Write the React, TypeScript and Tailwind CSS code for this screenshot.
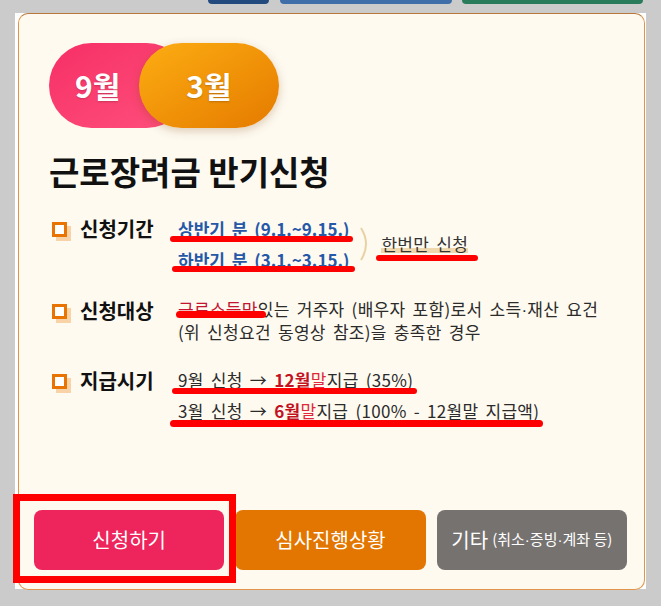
import type { ReactNode } from 'react'

function Box() {
  return <span className="mt-[6px] ml-[3px] block h-[15px] w-[15px] shrink-0 border-[3px] border-[#e87503] bg-white shadow-[4px_4px_0_#f9d3a8]" />
}

function Dot() {
  return <span className="font-['Liberation_Sans',sans-serif]">·</span>
}

function Row({ label, children, className }: { label: string; children: ReactNode; className: string }) {
  return (
    <div className={`flex items-start ${className}`}>
      <Box />
      <div className="ml-[13px] w-[98px] shrink-0 text-[20px] font-bold leading-[26px] text-[#111]">{label}</div>
      <div className="text-[17px] tracking-[0.3px] [word-spacing:3px] text-[#2b2b2b]">{children}</div>
    </div>
  )
}

export default function App() {
  return (
    <div className="min-h-[606px] bg-[#cbcbcb] font-['Noto_Sans_CJK_KR',sans-serif]">
      <div className="flex h-[4px] items-end">
        <div className="ml-[208px] h-[4px] w-[61px] rounded-b-[4px] bg-[#234a7e]" />
        <div className="ml-[11px] h-[4px] w-[172px] rounded-b-[4px] bg-[#3f6ea8]" />
        <div className="ml-[10px] h-[4px] w-[181px] rounded-b-[4px] bg-[#2a7b5c]" />
      </div>

      <div className="ml-[15px] mt-[11px] h-[576px] w-[631px] bg-white pl-[3px] pr-[1px]">
        <div className="-mt-[2px] flex h-[577px] flex-col rounded-[10px] border border-[#e0954a] border-t-[#b8783c] bg-[#fefaf0] pl-[30px] pt-[29px] pb-[19px]">
          <div className="flex">
            <div className="flex h-[85px] w-[140px] items-center rounded-full bg-gradient-to-br from-[#f62e66] to-[#ff4f7c] pl-[26px] text-[30px] font-bold text-white [text-shadow:0_1px_2px_rgba(0,0,0,0.2)]">
              9월
            </div>
            <div className="-ml-[50px] flex h-[85px] w-[140px] items-center justify-center rounded-full bg-gradient-to-br from-[#fcad12] to-[#e57a00] text-[30px] font-bold text-white shadow-[0_3px_10px_rgba(120,60,0,0.25)] [text-shadow:0_1px_2px_rgba(0,0,0,0.2)]">
              3월
            </div>
          </div>

          <h1 className="mt-[24px] text-[33px] font-bold leading-[38px] text-[#111]">근로장려금 반기신청</h1>

          <Row label="신청기간" className="mt-[26px]">
            <div className="flex items-center">
              <div className="flex flex-col gap-[6px] font-semibold tracking-normal text-[#2658a8]">
                <span className="relative block w-fit leading-[25px]">
                  상반기 분 (9.1.~9.15.)
                  <span className="absolute left-[-8px] right-[-4px] top-[20px] h-[6px] rounded-full bg-[#ff0000]" />
                </span>
                <span className="relative block w-fit leading-[25px]">
                  하반기 분 (3.1.~3.15.)
                  <span className="absolute left-[-6px] right-[-6px] top-[19px] h-[6px] rounded-full bg-[#ff0000]" />
                </span>
              </div>
              <svg width="14" height="34" viewBox="0 0 14 34" className="ml-[10px]">
                <path d="M2 1 Q12 17 2 33" fill="none" stroke="#e8d2a4" strokeWidth="2" />
              </svg>
              <span className="relative ml-[8px] leading-[24px] text-[#333]">
                <span className="bg-[linear-gradient(transparent_68%,#efd8ae_68%,#efd8ae_90%,transparent_90%)]">한번만 신청</span>
                <span className="absolute left-[-5px] right-[-10px] top-[23px] h-[6px] rounded-full bg-[#ff0000]" />
              </span>
            </div>
          </Row>

          <Row label="신청대상" className="mt-[26px]">
            <div className="leading-[21px]">
              <div>
                <span className="relative text-[#c31432]">
                  근로소득만
                  <span className="absolute left-[-2px] right-[-8px] top-[15px] h-[7px] rounded-full bg-[#ff0000]" />
                </span>
                있는 거주자 (배우자 포함)로서 소득<Dot />재산 요건
              </div>
              <div>(위 신청요건 동영상 참조)을 충족한 경우</div>
            </div>
          </Row>

          <Row label="지급시기" className="mt-[26px]">
            <div className="flex flex-col gap-[7px]">
              <span className="relative block w-fit leading-[24px]">
                9월 신청 → <b className="text-[#c3121f]">12월</b>
                <span className="text-[#e0283a]">말</span>지급 (35%)
                <span className="absolute left-[-6px] right-[-4px] top-[20px] h-[6px] rounded-full bg-[#ff0000]" />
              </span>
              <span className="relative block w-fit leading-[24px]">
                3월 신청 → <b className="text-[#c3121f]">6월</b>
                <span className="text-[#e0283a]">말</span>지급 (100% - 12월말 지급액)
                <span className="absolute left-[-8px] right-[-4px] top-[21px] h-[7px] rounded-full bg-[#ff0000]" />
              </span>
            </div>
          </Row>

          <div className="mt-auto -ml-[15px] mr-[17px] flex gap-[11px]">
            <div className="relative flex-1">
              <div className="flex h-[60px] items-center justify-center rounded-[8px] bg-[#ee245c] text-[20px] text-white">신청하기</div>
              <span className="pointer-events-none absolute -left-[21px] -right-[12px] -top-[16px] -bottom-[13px] border-[7px] border-[#ff0000]" />
            </div>
            <div className="flex h-[60px] flex-1 items-center justify-center rounded-[8px] bg-[#e27600] text-[20px] text-white">심사진행상황</div>
            <div className="flex h-[60px] flex-1 items-center justify-center rounded-[8px] bg-[#767270] text-[20px] text-white">
              기타 <span className="ml-[4px] text-[15px]">(취소<Dot />증빙<Dot />계좌 등)</span>
            </div>
          </div>
        </div>
      </div>
    </div>
  )
}
